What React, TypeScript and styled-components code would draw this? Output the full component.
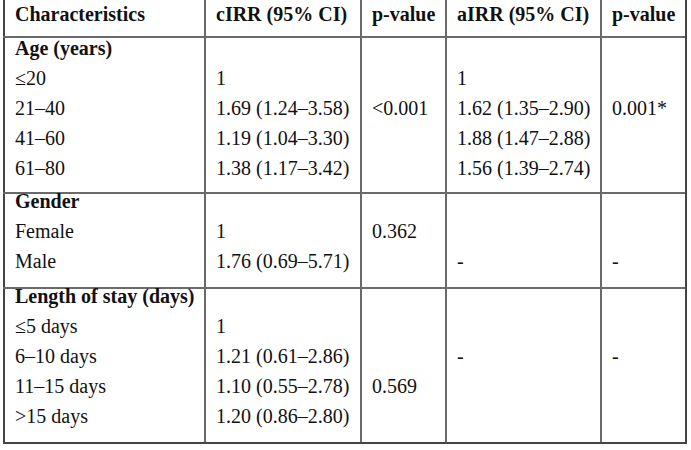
import React, {FC} from 'react';
import styled, {createGlobalStyle} from 'styled-components';

const GlobalStyle = createGlobalStyle`
  html, body {
    margin: 0;
    padding: 0;
    background: #ffffff;
  }
  body {
    font-family: "Liberation Serif", "Times New Roman", serif;
    font-size: 20px;
    color: #111111;
  }
`

const Sheet = styled.div`
  box-sizing: border-box;
  width: 684px;
  margin-left: 3px;
  border-right: 2px solid #444;
  border-bottom: 2px solid #444;
`

const Row = styled.div<{$last?: boolean}>`
  display: grid;
  grid-template-columns: 201px 156px 85px 155px 85px;
  border-bottom: ${p => (p.$last ? 'none' : '2px solid #6a6a6a')};
`

const Cell = styled.div<{$top: number, $bottom: number}>`
  box-sizing: border-box;
  display: flex;
  flex-direction: column;
  gap: 18px;
  padding: ${p => p.$top}px 6px ${p => p.$bottom}px 10px;
  border-left: 2px solid #6a6a6a;
  &:first-child {
    border-left-color: #444;
  }
`

const Line = styled.div<{$bold?: boolean}>`
  height: 12px;
  line-height: 12px;
  white-space: nowrap;
  font-weight: ${p => (p.$bold ? 700 : 400)};
`

type Group = {
  top: number,
  bottom: number,
  bold?: boolean,
  cols: string[][]
}

const groups: Group[] = [
  {
    top: 8, bottom: 16, bold: true,
    cols: [['Characteristics'], ['cIRR (95% CI)'], ['p-value'], ['aIRR (95% CI)'], ['p-value']]
  },
  {
    top: 4, bottom: 18,
    cols: [
      ['Age (years)', '≤20', '21–40', '41–60', '61–80'],
      ['', '1', '1.69 (1.24–3.58)', '1.19 (1.04–3.30)', '1.38 (1.17–3.42)'],
      ['', '', '<0.001'],
      ['', '1', '1.62 (1.35–2.90)', '1.88 (1.47–2.88)', '1.56 (1.39–2.74)'],
      ['', '', '0.001*']
    ]
  },
  {
    top: 1, bottom: 20,
    cols: [
      ['Gender', 'Female', 'Male'],
      ['', '1', '1.76 (0.69–5.71)'],
      ['', '0.362'],
      ['', '', '-'],
      ['', '', '-']
    ]
  },
  {
    top: 1, bottom: 20,
    cols: [
      ['Length of stay (days)', '≤5 days', '6–10 days', '11–15 days', '>15 days'],
      ['', '1', '1.21 (0.61–2.86)', '1.10 (0.55–2.78)', '1.20 (0.86–2.80)'],
      ['', '', '', '0.569'],
      ['', '', '-'],
      ['', '', '-']
    ]
  }
]

const App: FC = () => {
  return (
    <>
      <GlobalStyle/>
      <Sheet>
        {groups.map((g, gi) =>
          <Row key={gi} $last={gi === groups.length - 1}>
            {g.cols.map((lines, ci) =>
              <Cell key={ci} $top={g.top} $bottom={g.bottom}>
                {lines.map((text, li) =>
                  // header row is all bold, other groups only have their title bold
                  <Line key={li} $bold={g.bold || (ci === 0 && li === 0)}>{text}</Line>
                )}
              </Cell>
            )}
          </Row>
        )}
      </Sheet>
    </>
  );
};
export default App;
